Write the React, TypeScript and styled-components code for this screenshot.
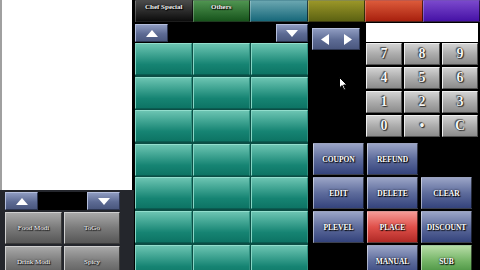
import React from "react";
import styled, { createGlobalStyle, css } from "styled-components";

const Global = createGlobalStyle`
  html, body { margin: 0; padding: 0; background: #000; }
  body { font-family: "Liberation Serif", "DejaVu Serif", serif; }
  * { box-sizing: border-box; }
`;

const Root = styled.div`
  width: 480px;
  height: 270px;
  background: #000;
  display: flex;
  overflow: hidden;
  position: relative;
`;

const LeftCol = styled.div`
  width: 134px;
  flex-shrink: 0;
  display: flex;
  flex-direction: column;
`;

const WhitePanel = styled.div`
  width: 132px;
  height: 190px;
  flex-shrink: 0;
  background: #fff;
  border-left: 2px solid #a0a0a0;
`;

const LeftBottom = styled.div`
  flex: 1 0 auto;
  background: #24262c;
  padding: 2px 14px 0 5px;
  display: flex;
  flex-direction: column;
  gap: 2px;
`;

const ArrowRow = styled.div<{ $h: number }>`
  display: flex;
  flex-shrink: 0;
  height: ${(p) => p.$h}px;
  background: #000;
`;

const Strip = styled.div`
  flex: 1;
  background: #000;
`;

const ArrowBtn = styled.div<{ $w: number }>`
  width: ${(p) => p.$w}px;
  height: 100%;
  display: flex;
  align-items: center;
  justify-content: center;
  background: linear-gradient(#8e9bc0, #5d6b94 55%, #4a577e);
  border: 1px solid;
  border-color: #b4bedc #2c3550 #2c3550 #b4bedc;
`;

const ModGrid = styled.div`
  display: grid;
  flex-shrink: 0;
  grid-template-columns: 57px 56px;
  grid-auto-rows: 32px;
  gap: 2px;
`;

const label = css`
  color: #fff;
  font-weight: bold;
  text-shadow: 0 0 2px #000, 1px 1px 1px #000;
  display: flex;
  align-items: center;
  justify-content: center;
  text-align: center;
  white-space: nowrap;
`;

const GreyBtn = styled.div`
  ${label};
  font-size: 7px;
  font-weight: normal;
  background: linear-gradient(#a8a8a8, #7a7a7a 50%, #565656);
  border: 1px solid;
  border-color: #cfcfcf #3a3a3a #3a3a3a #cfcfcf;
`;

const Main = styled.div`
  flex: 1;
  margin-left: 1px;
  display: flex;
  flex-direction: column;
  min-width: 0;
`;

const Tabs = styled.div`
  display: grid;
  flex-shrink: 0;
  grid-template-columns: repeat(6, 1fr);
  height: 22px;
`;

const tabColors: Record<string, [string, string]> = {
  black: ["#4a4a4a", "#0c0c0c"],
  green: ["#4f9450", "#17541c"],
  teal: ["#6aa6b0", "#17687a"],
  olive: ["#9a9628", "#5c6212"],
  red: ["#dc5a3a", "#a8200e"],
  purple: ["#7a48cc", "#4612a6"],
};

const Tab = styled.div<{ $c: string }>`
  ${label};
  align-items: flex-start;
  padding-top: 2px;
  font-size: 7px;
  color: #f0f0f0;
  background: linear-gradient(${(p) => tabColors[p.$c][0]}, ${(p) => tabColors[p.$c][1]});
  border: 1px solid;
  border-color: rgba(255, 255, 255, 0.25) rgba(0, 0, 0, 0.6) rgba(0, 0, 0, 0.6) rgba(255, 255, 255, 0.25);
`;

const Body = styled.div`
  display: flex;
  flex: 1 0 auto;
`;

const MidCol = styled.div`
  width: 173px;
  flex-shrink: 0;
  display: flex;
  flex-direction: column;
  padding-top: 2px;
`;

const TealGrid = styled.div`
  margin-top: 1px;
  flex-shrink: 0;
  display: grid;
  grid-template-columns: repeat(3, 1fr);
  grid-auto-rows: 32px;
  column-gap: 1px;
  row-gap: 1.6px;
  background: #0b4e45;
`;

const TealCell = styled.div`
  background: linear-gradient(#6cc4b2, #45a896 30%, #168473 68%, #0d7464);
  border: 1px solid;
  border-color: #92decd #2f8f7f #0a5c51 #86d6c5;
`;

const RightCol = styled.div`
  width: 172px;
  flex-shrink: 0;
  display: flex;
  flex-direction: column;
`;

const TopArea = styled.div`
  display: flex;
  flex-shrink: 0;
`;

const NavArea = styled.div`
  width: 58px;
  padding: 6px 0 0 4px;
`;

const NavPair = styled.div`
  display: flex;
  width: 48px;
  height: 22px;
  background: linear-gradient(#8e9bc0, #5d6b94 55%, #4a577e);
  border: 1px solid;
  border-color: #b4bedc #2c3550 #2c3550 #b4bedc;
`;

const NavHalf = styled.div`
  flex: 1;
  display: flex;
  align-items: center;
  justify-content: center;
`;

const KeyArea = styled.div`
  width: 112px;
  padding-top: 1px;
`;

const Input = styled.div`
  height: 19px;
  background: #fff;
`;

const Keypad = styled.div`
  margin-top: 1px;
  display: grid;
  grid-template-columns: repeat(3, 1fr);
  grid-auto-rows: 22px;
  gap: 2px;
`;

const Key = styled.div`
  ${label};
  font-size: 14px;
  color: #f4f4f4;
  text-shadow: 0 0 1px #000, 1px 1px 1px #333, -1px -1px 1px #555;
  background: linear-gradient(#d2d2d2, #acacac 50%, #8c8c8c);
  border: 1px solid;
  border-color: #efefef #505050 #505050 #efefef;
`;

const FuncGrid = styled.div`
  margin-top: 6px;
  padding-left: 5px;
  flex-shrink: 0;
  display: grid;
  grid-template-columns: repeat(3, 51px);
  grid-auto-rows: 32px;
  column-gap: 3px;
  row-gap: 2px;
`;

const funcColors: Record<string, [string, string, string]> = {
  blue: ["#9aa4c6", "#5e6c9c", "#34437c"],
  red: ["#f59a96", "#e0504a", "#b02a26"],
  green: ["#b6dca6", "#74b466", "#3f8a38"],
};

const FuncBtn = styled.div<{ $c: string }>`
  ${label};
  font-size: 7.5px;
  background: linear-gradient(
    ${(p) => funcColors[p.$c][0]},
    ${(p) => funcColors[p.$c][1]} 50%,
    ${(p) => funcColors[p.$c][2]}
  );
  border: 1px solid;
  border-color: rgba(255, 255, 255, 0.5) rgba(0, 0, 0, 0.6) rgba(0, 0, 0, 0.6) rgba(255, 255, 255, 0.5);
`;

const Empty = styled.div``;

const Cursor = styled.svg`
  position: absolute;
  left: 339px;
  top: 77px;
`;

const Tri = ({ dir, w = 12, h = 7 }: { dir: "up" | "down" | "left" | "right"; w?: number; h?: number }) => {
  const pts =
    dir === "up"
      ? `0,${h} ${w / 2},0 ${w},${h}`
      : dir === "down"
      ? `0,0 ${w},0 ${w / 2},${h}`
      : dir === "left"
      ? `${w},0 0,${h / 2} ${w},${h}`
      : `0,0 ${w},${h / 2} 0,${h}`;
  return (
    <svg width={w} height={h} viewBox={`0 0 ${w} ${h}`}>
      <polygon points={pts} fill="#fff" />
    </svg>
  );
};

const tabs: [string, string][] = [
  ["Chef Special", "black"],
  ["Others", "green"],
  ["", "teal"],
  ["", "olive"],
  ["", "red"],
  ["", "purple"],
];

const keys = ["7", "8", "9", "4", "5", "6", "1", "2", "3", "0", "•", "C"];

const funcs: [string, string][] = [
  ["COUPON", "blue"],
  ["REFUND", "blue"],
  ["", ""],
  ["EDIT", "blue"],
  ["DELETE", "blue"],
  ["CLEAR", "blue"],
  ["PLEVEL", "blue"],
  ["PLACE", "red"],
  ["DISCOUNT", "blue"],
  ["", ""],
  ["MANUAL", "blue"],
  ["SUB", "green"],
];

export default function App() {
  return (
    <>
      <Global />
      <Root>
        <LeftCol>
          <WhitePanel />
          <LeftBottom>
            <ArrowRow $h={18}>
              <ArrowBtn $w={33}>
                <Tri dir="up" />
              </ArrowBtn>
              <Strip />
              <ArrowBtn $w={33}>
                <Tri dir="down" />
              </ArrowBtn>
            </ArrowRow>
            <ModGrid>
              <GreyBtn>Food Modi</GreyBtn>
              <GreyBtn>ToGo</GreyBtn>
              <GreyBtn>Drink Modi</GreyBtn>
              <GreyBtn>Spicy</GreyBtn>
            </ModGrid>
          </LeftBottom>
        </LeftCol>
        <Main>
          <Tabs>
            {tabs.map(([t, c], i) => (
              <Tab key={i} $c={c}>
                {t}
              </Tab>
            ))}
          </Tabs>
          <Body>
            <MidCol>
              <ArrowRow $h={18}>
                <ArrowBtn $w={33}>
                  <Tri dir="up" />
                </ArrowBtn>
                <Strip />
                <ArrowBtn $w={32}>
                  <Tri dir="down" />
                </ArrowBtn>
              </ArrowRow>
              <TealGrid>
                {Array.from({ length: 21 }).map((_, i) => (
                  <TealCell key={i} />
                ))}
              </TealGrid>
            </MidCol>
            <RightCol>
              <TopArea>
                <NavArea>
                  <NavPair>
                    <NavHalf>
                      <Tri dir="left" w={8} h={11} />
                    </NavHalf>
                    <NavHalf>
                      <Tri dir="right" w={8} h={11} />
                    </NavHalf>
                  </NavPair>
                </NavArea>
                <KeyArea>
                  <Input />
                  <Keypad>
                    {keys.map((k) => (
                      <Key key={k}>{k}</Key>
                    ))}
                  </Keypad>
                </KeyArea>
              </TopArea>
              <FuncGrid>
                {funcs.map(([t, c], i) =>
                  c ? (
                    <FuncBtn key={i} $c={c}>
                      {t}
                    </FuncBtn>
                  ) : (
                    <Empty key={i} />
                  )
                )}
              </FuncGrid>
            </RightCol>
          </Body>
        </Main>
        <Cursor width="9" height="14" viewBox="0 0 9 14">
          <polygon points="0.5,0.5 0.5,11 3,8.5 5,13 6.5,12.3 4.6,8 8,8" fill="#fff" stroke="#000" strokeWidth="1" />
        </Cursor>
      </Root>
    </>
  );
}
